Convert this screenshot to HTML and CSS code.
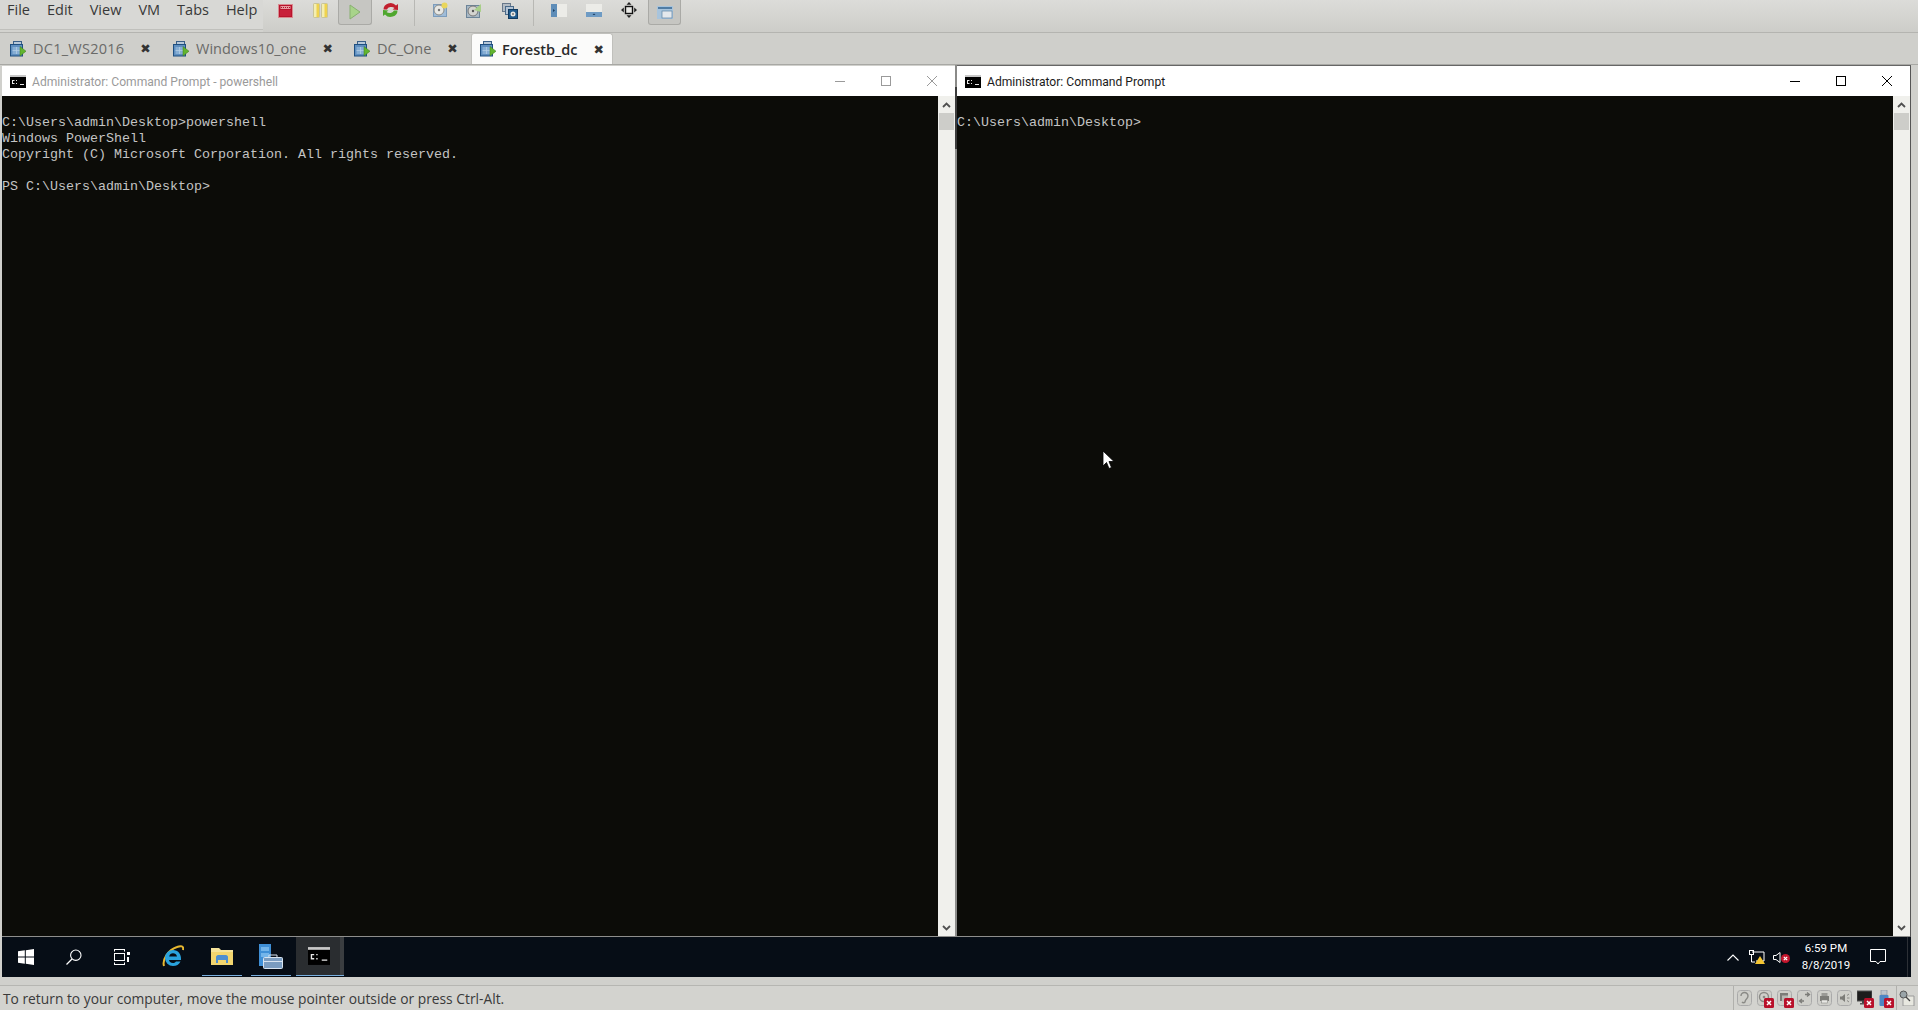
FILE: index.html
```html
<!DOCTYPE html>
<html lang="en">
<head>
<meta charset="utf-8">
<title>Forestb_dc - VMware Workstation</title>
<link rel="stylesheet" href="styles.css">
</head>
<body>
<svg class="defs" width="0" height="0" aria-hidden="true">
  <defs>
    <symbol id="vm" viewBox="0 0 16 16">
      <rect x="3.500" y="0.500" width="8" height="6" fill="#b6c8da" stroke="#3a5f88"/>
      <rect x="0.500" y="3.500" width="12" height="11.500" fill="#5f8fc0" stroke="#1f4f80"/>
      <rect x="2.500" y="6" width="8" height="7" fill="#86aed4"/>
      <path d="M2.500 9.500H10.500M6.500 6V13" stroke="#b8d0e6" stroke-width=".7"/>
      <path d="M10 5.500 L16 10.200 L10 15 Z" fill="#62b52f" stroke="#3d7d1a" stroke-width=".5"/>
    </symbol>
    <symbol id="badx" viewBox="0 0 10 10">
      <rect width="10" height="10" rx="1.500" fill="#b8102a"/>
      <path d="M3 3 L7 7 M7 3 L3 7" stroke="#fff" stroke-width="1.500"/>
    </symbol>
    <symbol id="cmd" viewBox="0 0 16 13">
      <rect width="16" height="13" fill="#000"/>
      <rect width="16" height="2" fill="#c8c8c8"/>
      <path d="M2 5h2.500v1H3v2h1.500v1H2z M6 5h1v1H6z M6 8h1v1H6z M8.500 8.500 L11 5 M10 9h4v1h-4z" fill="#e8e8e8" stroke="none"/>
    </symbol>
  </defs>
</svg>

<div class="app">
  <header class="menubar">
    <nav class="menus">
      <span class="menu">File</span>
      <span class="menu">Edit</span>
      <span class="menu">View</span>
      <span class="menu">VM</span>
      <span class="menu">Tabs</span>
      <span class="menu">Help</span>
    </nav>
    <div class="toolbar">
      <svg class="ti ti-stop" viewBox="0 0 15 14"><rect x=".5" y=".5" width="14" height="13" fill="#b8142c" stroke="#d98a90"/><rect x="2.500" y="2" width="10" height="3" fill="#e89aa0"/><path d="M3 3.500H12" stroke="#a81428" stroke-dasharray="1 1"/><rect x="2" y="6" width="11" height="6" fill="#c8203a"/></svg>
      <svg class="ti ti-pause" viewBox="0 0 15 15"><rect x="0.500" y=".5" width="6" height="14" rx="1" fill="#efd24e" stroke="#c8c498"/><rect x="1" y="1" width="2.500" height="13" fill="#f4eeb0"/><rect x="8.500" y=".5" width="6" height="14" rx="1" fill="#efd24e" stroke="#c8c498"/><rect x="9" y="1" width="2.500" height="13" fill="#f4eeb0"/></svg>
      <span class="tbtn tbtn-play"><svg class="ti-play" viewBox="0 0 12 16"><path d="M1 1 L11 8 L1 15 Z" fill="#a8d48a" stroke="#88b070"/></svg></span>
      <svg class="ti ti-reset" viewBox="0 0 17 16"><path d="M1.500 7.500 A7 6.500 0 0 1 14 3.500 L16 2 L16 8 L10.500 7.500 L12.500 6 A4.500 3.500 0 0 0 5 7.500 Z" fill="#c2202e"/><path d="M15.500 8.500 A7 6.500 0 0 1 3 12.500 L1 14 L1 8 L6.500 8.500 L4.500 10 A4.500 3.500 0 0 0 12 8.500 Z" fill="#4fa72e"/></svg>
      <span class="tsep"></span>
      <svg class="ti ti-snap1" viewBox="0 0 16 15"><rect x="1.500" y="2.500" width="13" height="12" fill="#9fbcd8" stroke="#7c9cbc"/><circle cx="7" cy="8" r="5" fill="#e8e8e4" stroke="#8c8c88"/><circle cx="7" cy="8" r="1.200" fill="#777"/><circle cx="12.500" cy="3.500" r="3" fill="#e9d65c"/></svg>
      <svg class="ti ti-snap2" viewBox="0 0 16 15"><rect x="0.500" y="2.500" width="13" height="12" fill="#a8b8c4" stroke="#6c8498"/><circle cx="7" cy="8" r="5" fill="#d4d4d0" stroke="#777"/><circle cx="7" cy="8" r="1.200" fill="#555"/><path d="M8 7 L15 1 L15 9 Z" fill="#a8cf88"/></svg>
      <svg class="ti ti-snap3" viewBox="0 0 16 16"><rect x="0.500" y="0.500" width="8" height="8" fill="#b4bcc4" stroke="#68788a"/><rect x="3.500" y="3.500" width="8" height="8" fill="#b4c4d4" stroke="#4a6a8a"/><rect x="6.500" y="6.500" width="9" height="9" fill="#1f5a8c" stroke="#103a60"/><circle cx="11" cy="11" r="2.500" fill="#e8e8e4"/><circle cx="11" cy="11" r=".8" fill="#222"/></svg>
      <span class="tsep tsep-2"></span>
      <svg class="ti ti-view1" viewBox="0 0 16 13"><rect width="16" height="13" fill="#ecece8"/><rect width="6" height="13" fill="#5e8db8"/><path d="M2 5 L4 6.500 L2 8 Z" fill="#1c3d60"/></svg>
      <svg class="ti ti-view2" viewBox="0 0 16 13"><rect width="16" height="13" fill="#ecece8"/><rect y="8" width="16" height="5" fill="#6e9bc4"/><path d="M6.500 11 L8 9.500 L9.500 11 Z" fill="#1c3d60"/></svg>
      <svg class="ti ti-fit" viewBox="0 0 16 16"><rect x="4.500" y="4.500" width="7" height="7" fill="#e8e8e4" stroke="#111" stroke-width="1.400"/><path d="M8 0 L10.500 2.800 H5.500 Z M8 16 L5.500 13.200 H10.500 Z M0 8 L2.800 5.500 V10.500 Z M16 8 L13.200 10.500 V5.500 Z" fill="#222"/></svg>
      <span class="tbtn tbtn-full"><svg class="ti-full" viewBox="0 0 16 13"><rect width="16" height="13" fill="#a8c4dc"/><rect x="1" y="1" width="14" height="2" fill="#4f7ca4"/><rect x="5" y="5" width="10" height="7" fill="#e4e8ec" stroke="#5c82a4" stroke-width=".7"/></svg></span>
    </div>
  </header>

  <div class="tabbar">
    <div class="tab tab-1"><svg class="tab-icon"><use href="#vm"/></svg><span class="tab-label">DC1_WS2016</span><span class="tab-x">✖</span></div>
    <div class="tab tab-2"><svg class="tab-icon"><use href="#vm"/></svg><span class="tab-label">Windows10_one</span><span class="tab-x">✖</span></div>
    <div class="tab tab-3"><svg class="tab-icon"><use href="#vm"/></svg><span class="tab-label">DC_One</span><span class="tab-x">✖</span></div>
    <div class="tab tab-active"><svg class="tab-icon"><use href="#vm"/></svg><span class="tab-label">Forestb_dc</span><span class="tab-x">✖</span></div>
  </div>

  <main class="guest">
    <div class="windows">
      <section class="win win-left">
        <div class="titlebar">
          <svg class="title-icon"><use href="#cmd"/></svg>
          <span class="title-text">Administrator: Command Prompt - powershell</span>
          <span class="controls">
            <svg class="ctl" viewBox="0 0 10 10"><path d="M0 5.500H10" stroke="currentColor"/></svg>
            <svg class="ctl" viewBox="0 0 10 10"><rect x=".5" y=".5" width="9" height="9" fill="none" stroke="currentColor"/></svg>
            <svg class="ctl" viewBox="0 0 10 10"><path d="M0 0L10 10M10 0L0 10" stroke="currentColor"/></svg>
          </span>
        </div>
        <div class="body">
          <pre class="console">C:\Users\admin\Desktop&gt;powershell
Windows PowerShell
Copyright (C) Microsoft Corporation. All rights reserved.

PS C:\Users\admin\Desktop&gt;</pre>
          <div class="scrollbar">
            <svg class="chev" viewBox="0 0 9 6"><path d="M1 5L4.500 1.500L8 5" fill="none" stroke="#505050" stroke-width="1.800"/></svg>
            <span class="thumb"></span>
            <svg class="chev chev-down" viewBox="0 0 9 6"><path d="M1 1L4.500 4.500L8 1" fill="none" stroke="#505050" stroke-width="1.800"/></svg>
          </div>
        </div>
      </section>
      <span class="win-gap"></span>
      <section class="win win-right">
        <div class="titlebar">
          <svg class="title-icon"><use href="#cmd"/></svg>
          <span class="title-text">Administrator: Command Prompt</span>
          <span class="controls">
            <svg class="ctl" viewBox="0 0 10 10"><path d="M0 5.500H10" stroke="currentColor"/></svg>
            <svg class="ctl" viewBox="0 0 10 10"><rect x=".5" y=".5" width="9" height="9" fill="none" stroke="currentColor"/></svg>
            <svg class="ctl" viewBox="0 0 10 10"><path d="M0 0L10 10M10 0L0 10" stroke="currentColor"/></svg>
          </span>
        </div>
        <div class="body">
          <pre class="console">C:\Users\admin\Desktop&gt;</pre>
          <div class="scrollbar">
            <svg class="chev" viewBox="0 0 9 6"><path d="M1 5L4.500 1.500L8 5" fill="none" stroke="#505050" stroke-width="1.800"/></svg>
            <span class="thumb"></span>
            <svg class="chev chev-down" viewBox="0 0 9 6"><path d="M1 1L4.500 4.500L8 1" fill="none" stroke="#505050" stroke-width="1.800"/></svg>
          </div>
        </div>
      </section>
    </div>

    <div class="taskbar">
      <svg class="tk tk-win" viewBox="0 0 16 16"><path d="M0 2.300L6.800 1.300V7.500H0Z M7.800 1.200L16 0V7.500H7.800Z M0 8.500H6.800V14.700L0 13.700Z M7.800 8.500H16V16L7.800 14.800Z" fill="#fff"/></svg>
      <svg class="tk tk-search" viewBox="0 0 16 16"><circle cx="9.800" cy="6.200" r="5.200" fill="none" stroke="#fff" stroke-width="1.100"/><path d="M6 10L.5 15.500" stroke="#fff" stroke-width="1.200"/></svg>
      <svg class="tk tk-view" viewBox="0 0 17 16"><path d="M1 .5H12 M1 15.500H12" stroke="#fff"/><rect x="1.500" y="4.500" width="10" height="7" fill="none" stroke="#fff"/><path d="M1.500 .5V2.500M11.500 .5V2.500M1.500 15.500V13.500M11.500 15.500V13.500" stroke="#fff"/><rect x="14" y="3" width="3" height="3" fill="#fff"/><rect x="14" y="8" width="2" height="5" fill="#fff"/></svg>
      <svg class="tk tk-ie" viewBox="0 0 22 24"><path d="M2 21C0 15 6 5 15 2C19 0.500 22 1 21 5" fill="none" stroke="#e8b830" stroke-width="2"/><path d="M11 5A8 8 0 0 0 11 21C14.500 21 17 19.500 18.500 16.500H14C13 17.700 12 18 11 18C8.500 18 7 16.500 7 15H19C19.500 9 16 5 11 5ZM7.200 11.500C7.700 9.500 9 8.300 11 8.300C13 8.300 14.500 9.500 15 11.500Z" fill="#29a3de"/></svg>
      <span class="tk-app tk-app-folder"><svg class="tk-folder" viewBox="0 0 22 18"><path d="M0 1H8L10 3H22V18H0Z" fill="#f5e39a"/><rect y="5" width="22" height="13" fill="#f2d56f"/><path d="M5 16V10C5 9 6 8 7 8H15C16 8 17 9 17 10V16H15V13H7V16Z" fill="#4d8ed0"/></svg></span>
      <span class="tk-app tk-app-server"><svg class="tk-server" viewBox="0 0 24 25"><rect width="12" height="22" fill="#3f8fd6"/><rect x="2" y="3" width="8" height="4" fill="#74b5ea"/><rect x="2" y="9" width="8" height="4" fill="#74b5ea"/><rect x="4.500" y="13.500" width="19" height="11" rx="1" fill="#7a9cc0" stroke="#d8e4f0"/><path d="M10 13V11H18V13M4 17.500H24" stroke="#d8e4f0" fill="none"/></svg></span>
      <span class="tk-app tk-active"><svg class="tk-cmd"><use href="#cmd"/></svg></span>
      <span class="tray">
        <svg class="tr tr-up" viewBox="0 0 12 7"><path d="M.5 6.500L6 1L11.500 6.500" fill="none" stroke="#fff" stroke-width="1.100"/></svg>
        <svg class="tr tr-net" viewBox="0 0 16 14"><path d="M3 2H15V11H7" fill="none" stroke="#fff"/><rect x=".5" y=".5" width="4" height="4" fill="none" stroke="#fff"/><path d="M2.500 5V12H6" fill="none" stroke="#fff"/><path d="M11 6L16 14H6Z" fill="#f4c531"/></svg>
        <span class="tr-vol"><svg class="tr-spk" viewBox="0 0 8 11"><path d="M.5 3.500H3L7 .5V10.500L3 7.500H.5Z" fill="none" stroke="#fff"/></svg><svg class="tr-bad" viewBox="0 0 9 9"><circle cx="4.500" cy="4.500" r="4.500" fill="#c3152c"/><path d="M2.800 2.800L6.200 6.200M6.200 2.800L2.800 6.200" stroke="#fff" stroke-width="1.200"/></svg></span>
        <span class="clock"><span>6:59 PM</span><span>8/8/2019</span></span>
        <svg class="tr tr-note" viewBox="0 0 16 16"><path d="M.5 .5H15.500V12.500H10L8 15L6 12.500H.5Z" fill="none" stroke="#fff"/></svg>
      </span>
      <span class="task-end"></span>
    </div>
  </main>

  <footer class="statusbar">
    <span class="status-text">To return to your computer, move the mouse pointer outside or press Ctrl-Alt.</span>
    <span class="devices">
      <span class="dev"><svg viewBox="0 0 15 16"><rect x=".5" y=".5" width="14" height="15" rx="3" fill="#cfcfca" stroke="#aaa"/><path d="M4 6A3.500 3.500 0 0 1 11 6C11 9 8 9 8 12A2 2 0 0 1 5 12" fill="none" stroke="#8a8a86" stroke-width="1.400"/></svg></span>
      <span class="dev"><svg viewBox="0 0 15 16"><rect x=".5" y=".5" width="14" height="15" rx="3" fill="#cfcfca" stroke="#aaa"/><circle cx="7" cy="7" r="4.500" fill="none" stroke="#8a8a86" stroke-width="1.400"/><circle cx="7" cy="7" r="1.300" fill="#8a8a86"/></svg><svg class="dev-x"><use href="#badx"/></svg></span>
      <span class="dev"><svg viewBox="0 0 15 16"><rect x=".5" y=".5" width="14" height="15" rx="3" fill="#cfcfca" stroke="#aaa"/><rect x="3" y="3" width="8" height="8" fill="#7c7c78"/><rect x="5" y="5.500" width="6" height="6" fill="#b8b8b4"/></svg><svg class="dev-x"><use href="#badx"/></svg></span>
      <span class="dev"><svg viewBox="0 0 15 16"><rect x=".5" y=".5" width="14" height="15" rx="3" fill="#cfcfca" stroke="#aaa"/><path d="M8 4.500H12M10 2.500L12.500 4.500L10 6.500M7 11H3M5 9L2.500 11L5 13" fill="none" stroke="#7c7c78" stroke-width="1.300"/></svg></span>
      <span class="dev"><svg viewBox="0 0 15 16"><rect x=".5" y=".5" width="14" height="15" rx="3" fill="#cfcfca" stroke="#aaa"/><rect x="3" y="6" width="9" height="5" fill="#7c7c78"/><rect x="4.500" y="3" width="6" height="3" fill="#9a9a96"/><rect x="4.500" y="10" width="6" height="3" fill="#e8e8e4" stroke="#7c7c78" stroke-width=".5"/></svg></span>
      <span class="dev"><svg viewBox="0 0 15 16"><rect x=".5" y=".5" width="14" height="15" rx="3" fill="#cfcfca" stroke="#aaa"/><path d="M3 6.500H5L8 4V12L5 9.500H3Z" fill="#7c7c78"/><path d="M10 5.500L12 4M10 8H12.500M10 10.500L12 12" stroke="#8a8a86"/></svg></span>
      <span class="dev"><svg viewBox="0 0 15 16"><rect x="0" y="1" width="15" height="10" fill="#1c1c1c" stroke="#555"/><rect x="5" y="11" width="5" height="2" fill="#444"/><rect x="3" y="13" width="9" height="1.500" fill="#555"/></svg><svg class="dev-x"><use href="#badx"/></svg></span>
      <span class="dev"><svg viewBox="0 0 15 16"><rect x="4" y="0" width="6" height="5" fill="#bcc4cc" stroke="#7c8894" stroke-width=".6"/><rect x="2.500" y="5" width="9" height="11" rx="1" fill="#4d86c4"/></svg><svg class="dev-x"><use href="#badx"/></svg></span>
    </span>
    <span class="dev-sep"></span>
    <svg class="dev-last" viewBox="0 0 16 16"><path d="M4 6H15V16H4Z" fill="#e8e8e0" stroke="#999"/><circle cx="4.500" cy="4.500" r="3.500" fill="#9aa4a8" stroke="#555"/><path d="M7 7L11 11" stroke="#444" stroke-width="1.300"/></svg>
  </footer>

  <svg class="cursor" viewBox="0 0 12 20"><path d="M1 1V16L4.500 12.500L7 18.500L9.500 17.500L7 11.500H12Z" fill="#fff" stroke="#000" stroke-width=".8"/></svg>
</div>
</body>
</html>
```

FILE: styles.css
```css
* { box-sizing: border-box; }
html, body { margin: 0; padding: 0; height: 100%; overflow: hidden; }
body { font-family: "Open Sans", "Noto Sans", sans-serif; background: #d0d0cc; }
.defs { position: absolute; }
.app {
  position: relative;
  width: 1918px;
  height: 1010px;
  display: flex;
  flex-direction: column;
  overflow: hidden;
}

/* menu + toolbar */
.menubar {
  height: 33px;
  display: flex;
  align-items: flex-start;
  background: #d3d3cf;
  border-bottom: 1px solid #b4b4b0;
}
.menus {
  width: 263px;
  height: 30px;
  display: flex;
  gap: 17px;
  padding-left: 7px;
  align-items: center;
  padding-bottom: 11px;
  background: #d8d8d5;
  border-bottom: 1px solid #c0c0bc;
  font-size: 14.5px;
  color: #383838;
}
.toolbar {
  flex: 1;
  height: 32px;
  display: flex;
  align-items: flex-start;
  background: linear-gradient(#dcdcd9, #cdcdc9);
}
.ti { flex: none; margin-top: 4px; }
.ti-stop { width: 15px; height: 14px; margin-left: 15px; }
.ti-pause { width: 15px; height: 15px; margin-top: 3px; margin-left: 20px; }
.tbtn {
  flex: none;
  display: flex;
  align-items: center;
  justify-content: center;
  height: 25px;
  background: #c6c6c2;
  border: 1px solid #aaaaa6;
  border-top: 0;
  border-radius: 0 0 3px 3px;
}
.tbtn-play { width: 34px; margin-left: 10px; }
.ti-play { width: 12px; height: 16px; }
.ti-reset { width: 17px; height: 16px; margin-top: 2px; margin-left: 10px; }
.tsep { flex: none; width: 1px; height: 26px; background: #b8b8b4; margin-left: 15px; }
.ti-snap1 { width: 16px; height: 15px; margin-top: 2px; margin-left: 17px; }
.ti-snap2 { width: 16px; height: 15px; margin-top: 3px; margin-left: 18px; }
.ti-snap3 { width: 16px; height: 16px; margin-top: 3px; margin-left: 20px; }
.tsep-2 { margin-left: 15px; }
.ti-view1 { width: 16px; height: 13px; margin-left: 17px; }
.ti-view2 { width: 16px; height: 13px; margin-left: 19px; }
.ti-fit { width: 16px; height: 16px; margin-top: 2px; margin-left: 19px; }
.tbtn-full { width: 33px; margin-left: 11px; }
.ti-full { width: 16px; height: 13px; }

/* tabs */
.tabbar {
  height: 33px;
  display: flex;
  align-items: flex-end;
  background: #cfcfcb;
  border-bottom: 1px solid #a8a8a4;
  font-size: 14.5px;
  color: #6a6a68;
}
.tab { height: 31px; display: flex; align-items: center; padding-left: 10px; }
.tab-icon { width: 16px; height: 16px; flex: none; }
.tab-label { margin-left: 7px; white-space: nowrap; }
.tab-1 .tab-label { letter-spacing: .25px; }
.tab-x { margin-left: 16px; font-family: "DejaVu Sans", sans-serif; font-size: 12.5px; color: #333; }
.tab-1 { width: 163px; }
.tab-2 { width: 181px; }
.tab-3 { width: 127px; }
.tab-active {
  width: 142px;
  padding-left: 8px;
  background: #fbfbfa;
  border: 1px solid #c0c0bc;
  border-bottom: 0;
  border-radius: 3px 3px 0 0;
  color: #2a2a2a;
  font-weight: 600;
}
.tab-active .tab-label { margin-left: 6px; }

/* guest screen */
.guest {
  height: 920px;
  padding: 0 7px 0 2px;
  display: flex;
  flex-direction: column;
}
.windows { height: 872px; display: flex; flex: none; }
.win { display: flex; flex-direction: column; flex: none; }
.win-left { width: 953px; padding-top: 1px; color: #9a9a9a; }
.win-right { width: 954px; color: #000; border-top: 1px solid #666; border-right: 1px solid #555; }
.win-gap { flex: none; width: 2px; background: linear-gradient(#8a8a88 0, #8a8a88 22px, #3c3c3c 22px, #3c3c3c 84px, #8c8c8a 84px, #8c8c8a 100%); }
.titlebar {
  height: 30px;
  flex: none;
  display: flex;
  align-items: center;
  background: #fff;
  font-size: 12.1px;
}
.title-icon { width: 16px; height: 13px; flex: none; margin-left: 8px; margin-top: 1px; }
.title-text { margin-left: 6px; padding-top: 1px; font-family: "Roboto", "Noto Sans", sans-serif; }
.win-right .title-text { color: #1a1a1a; }
.controls { margin-left: auto; display: flex; gap: 36px; padding-right: 18px; }
.ctl { width: 10px; height: 10px; display: block; }
.body { flex: 1; display: flex; min-height: 0; border-bottom: 1px solid #8e8e8c; }
.console {
  flex: 1;
  margin: 0;
  padding-top: 19px;
  background: #0c0c08;
  color: #c4c4c4;
  font-family: "Liberation Mono", monospace;
  font-size: 13.33px;
  line-height: 16px;
}
.scrollbar {
  width: 17px;
  flex: none;
  display: flex;
  flex-direction: column;
  align-items: center;
  background: #f0f0ec;
  padding: 6px 0 5px;
}
.chev { width: 9px; height: 6px; flex: none; }
.chev-down { margin-top: auto; }
.thumb { width: 15px; height: 17px; flex: none; margin-top: 5px; background: #cdcdc9; }

/* taskbar */
.taskbar {
  height: 40px;
  flex: none;
  display: flex;
  align-items: center;
  background: #060d16;
  color: #fff;
}
.tk { flex: none; display: block; }
.tk-win { width: 16px; height: 16px; margin-left: 16px; }
.tk-search { width: 16px; height: 16px; margin-left: 32px; }
.tk-view { width: 17px; height: 16px; margin-left: 31px; }
.tk-ie { width: 22px; height: 24px; margin-left: 32px; }
.tk-app {
  flex: none;
  align-self: flex-start;
  height: 39px;
  display: flex;
  align-items: center;
  justify-content: center;
  border-bottom: 1px solid #7ab0e0;
}
.tk-app-folder { width: 40px; margin-left: 18px; }
.tk-app-server { width: 40px; margin-left: 9px; }
.tk-folder { width: 22px; height: 18px; }
.tk-server { width: 24px; height: 25px; }
.tk-active {
  width: 48px;
  margin-left: 5px;
  padding-right: 3px;
  background: linear-gradient(90deg, #2a2d30 44px, #3a3d40 44px);
}
.tk-cmd { width: 22px; height: 18px; }
.tray { margin-left: auto; display: flex; align-items: center; }
.tr { flex: none; display: block; }
.tr-up { width: 12px; height: 7px; }
.tr-net { width: 16px; height: 14px; margin-left: 10px; }
.tr-vol { display: flex; align-items: center; margin-left: 8px; width: 17px; position: relative; }
.tr-spk { width: 8px; height: 11px; }
.tr-bad { width: 9px; height: 9px; margin-top: 2px; }
.clock {
  display: flex;
  flex-direction: column;
  align-items: center;
  width: 42px;
  margin-left: 15px;
  font-family: "Roboto", "Noto Sans", sans-serif;
  font-size: 11.5px;
  line-height: 17px;
  white-space: nowrap;
}
.tr-note { width: 16px; height: 16px; margin-left: 23px; }
.task-end { flex: none; width: 1px; height: 40px; margin-left: 21px; margin-right: 3px; background: #2c3036; }

/* status bar */
.statusbar {
  flex: 1;
  margin-top: 8px;
  display: flex;
  align-items: center;
  border-top: 1px solid #b6b6b2;
  padding-left: 3px;
  background: #d3d3cf;
}
.status-text { font-size: 13.8px; color: #3a3a3a; white-space: nowrap; }
.devices { margin-left: auto; display: flex; gap: 5px; padding-left: 3px; border-left: 1px solid #b0b0ac; height: 24px; align-items: center; }
.dev { position: relative; width: 15px; height: 16px; flex: none; }
.dev svg { width: 15px; height: 16px; display: block; }
.dev .dev-x { position: absolute; width: 10px; height: 10px; right: -2px; bottom: -2px; }
.dev-sep { flex: none; width: 1px; height: 24px; background: #b0b0ac; margin-left: 4px; }
.dev-last { width: 16px; height: 16px; flex: none; margin: 0 3px 0 2px; }

.cursor { position: absolute; left: 1102px; top: 450px; width: 12px; height: 20px; }
```
